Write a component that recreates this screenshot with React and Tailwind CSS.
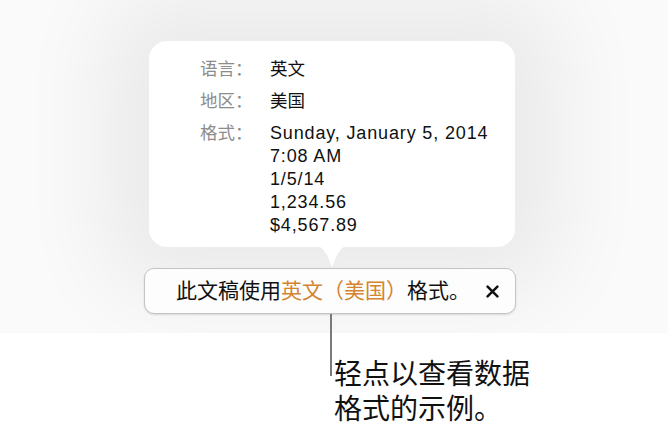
import React from "react";

const font = { fontFamily: '"Liberation Sans", "Noto Sans CJK SC", sans-serif' };

export default function App() {
  return (
    <div
      className="relative w-[668px] h-[434px] overflow-hidden bg-white"
      style={font}
    >
      {/* gray stage */}
      <div className="relative h-[333px] overflow-hidden bg-[#fafafa] pl-[149px] pt-[41px]">
        {/* popover */}
        <div className="relative w-[366px] h-[206px] rounded-[18px] bg-white shadow-[0_0_90px_45px_rgba(0,0,0,0.065)] pl-[51px] pt-[17px]">
          <div className="grid grid-cols-[70px_1fr] gap-y-[9px] text-[17.5px] leading-[23px]">
            <div className="text-[#8c8c8c]">语言：</div>
            <div className="text-[#111]">英文</div>
            <div className="text-[#8c8c8c]">地区：</div>
            <div className="text-[#111]">美国</div>
            <div className="text-[#8c8c8c]">格式：</div>
            <div className="flex flex-col text-[#111] text-[18px] tracking-[0.85px]">
              <span>Sunday, January 5, 2014</span>
              <span>7:08 AM</span>
              <span>1/5/14</span>
              <span>1,234.56</span>
              <span>$4,567.89</span>
            </div>
          </div>
          {/* arrow */}
          <svg
            className="absolute left-[162px] top-[204px]"
            width="42"
            height="24"
            viewBox="0 0 42 24"
          >
            <path d="M0 0 C10 0 12 4 16 10 L21 22 L26 10 C30 4 32 0 42 0 Z" fill="#ffffff" />
          </svg>
        </div>
        {/* bar */}
        <div className="relative -ml-[5px] mt-[21px] flex h-[46px] w-[372px] items-center rounded-[10px] border border-[#c4c4c4] bg-[#fdfdfd] pl-[31px] pr-[15px] shadow-[0_1px_2px_rgba(0,0,0,0.12)]">
          <span className="text-[21px] text-[#111]">
            此文稿使用<span className="text-[#d4842f]">英文（美国）</span>格式。
          </span>
          <svg className="ml-auto mr-[1px]" width="13" height="13" viewBox="0 0 13 13">
            <path d="M1.6 1.6 L11.4 11.4 M11.4 1.6 L1.6 11.4" stroke="#111" strokeWidth="2.5" strokeLinecap="round" />
          </svg>
        </div>
      </div>

      {/* callout line */}
      <div className="absolute left-[330px] top-[314px] h-[62px] w-[2px] bg-[#7a7a7a]" />

      {/* callout text */}
      <div className="pl-[334px] pt-[24px] text-[28px] leading-[35px] text-[#111]">
        <div>轻点以查看数据</div>
        <div>格式的示例。</div>
      </div>
    </div>
  );
}
